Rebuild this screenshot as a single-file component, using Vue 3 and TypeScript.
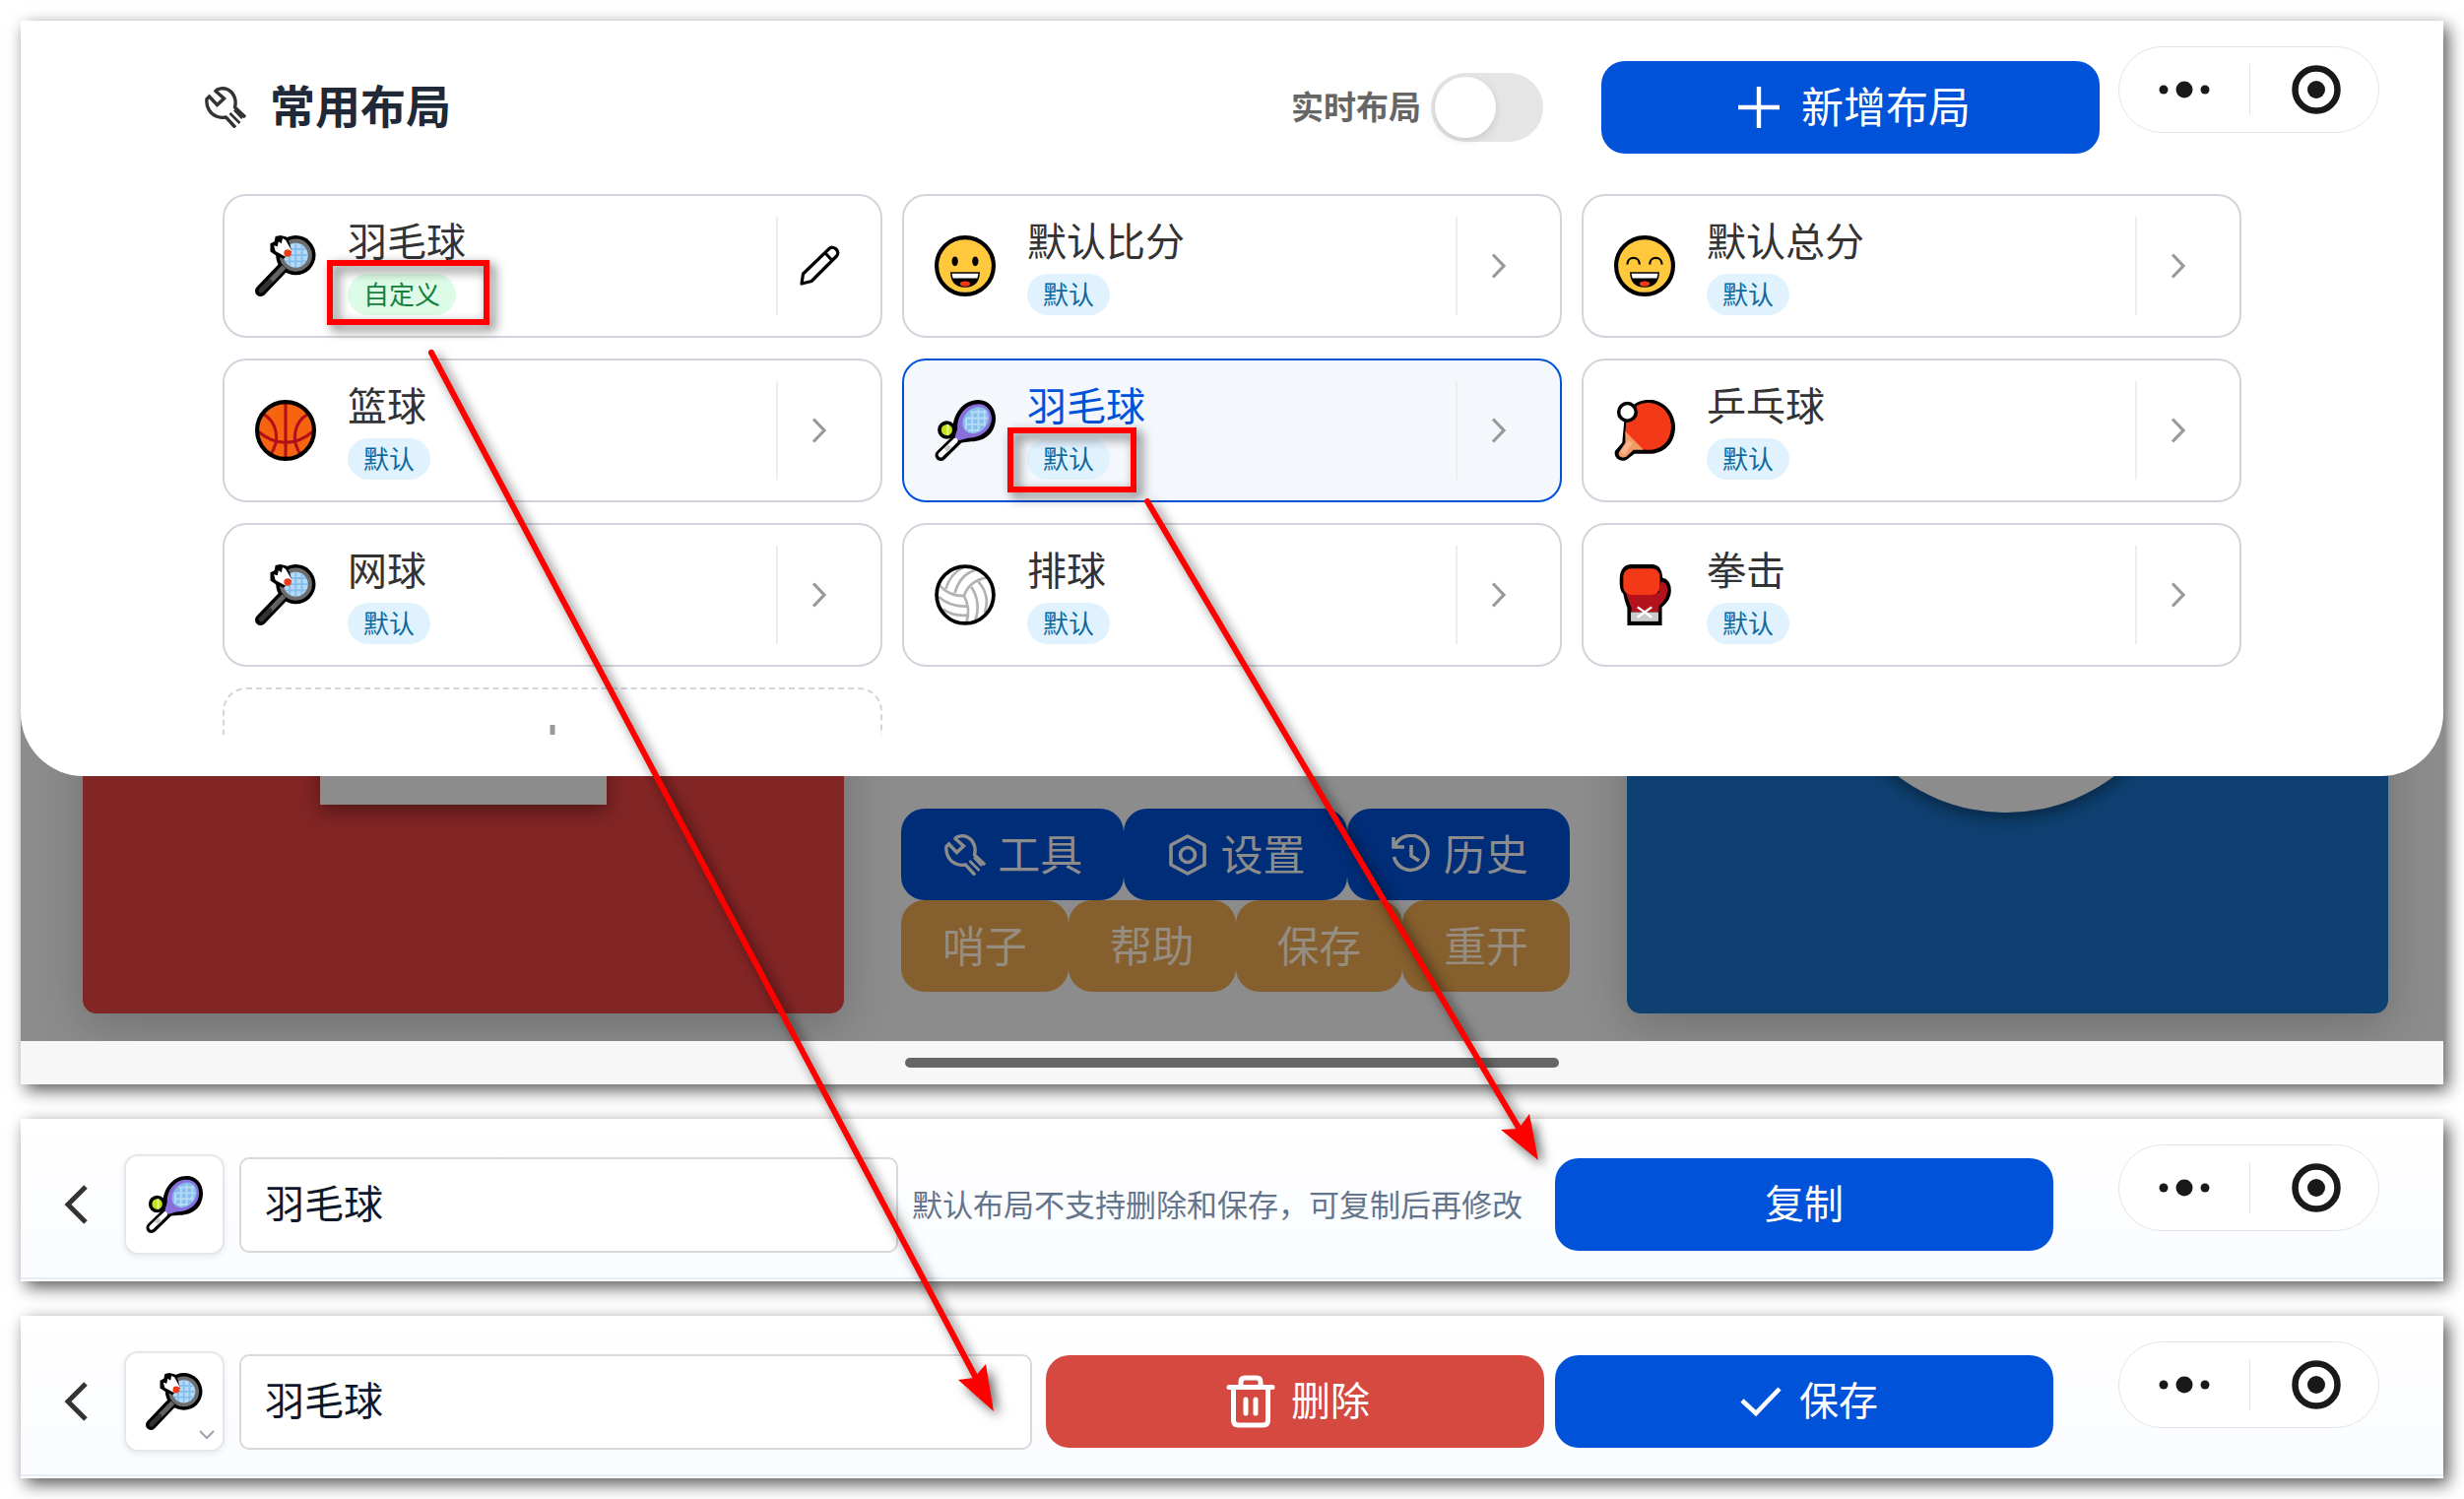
<script setup lang="ts">
import { ref } from 'vue'

interface LayoutItem {
  id: number
  name: string
  icon: string
  custom?: boolean
  active?: boolean
}

const layouts: LayoutItem[] = [
  { id: 1, name: '羽毛球', icon: 'badminton', custom: true },
  { id: 2, name: '默认比分', icon: 'grin' },
  { id: 3, name: '默认总分', icon: 'smile' },
  { id: 4, name: '篮球', icon: 'basketball' },
  { id: 5, name: '羽毛球', icon: 'tennis', active: true },
  { id: 6, name: '乒乓球', icon: 'pingpong' },
  { id: 7, name: '网球', icon: 'badminton' },
  { id: 8, name: '排球', icon: 'volleyball' },
  { id: 9, name: '拳击', icon: 'boxing' },
]

const mainActions = [
  { label: '工具', icon: 'wrench' },
  { label: '设置', icon: 'settings' },
  { label: '历史', icon: 'history' },
]
const quickActions = ['哨子', '帮助', '保存', '重开']

const live = ref(false)
const defaultName = ref('羽毛球')
const customName = ref('羽毛球')
</script>

<template>
  <main class="page" lang="zh-CN">
    <svg class="sprite" aria-hidden="true">
      <symbol id="wrench" viewBox="0 0 42 42">
        <g fill="none" stroke="currentColor" stroke-width="3.4">
          <path d="M31 41.500L21.500 31C19 31.500 16 31.500 13 30.500C5 28 1 20 2 12.500L4.500 10L12.500 18.500L19.500 12L11 4.500C13 1.500 19 1 23.500 3C29.500 6 32.500 13.500 30.500 21L41 31" />
          <path d="M25.500 27L35.500 37M30 23.500L38 32" stroke-width="2.600" />
        </g>
      </symbol>
      <symbol id="settings" viewBox="0 0 42 42">
        <g fill="none" stroke="currentColor" stroke-width="3.6">
          <path d="M21 2L38 11V31L21 40L4 31V11Z" stroke-linejoin="round" />
          <circle cx="21" cy="21" r="7.500" />
        </g>
      </symbol>
      <symbol id="history" viewBox="0 0 42 42">
        <g fill="none" stroke="currentColor" stroke-width="3.6">
          <path d="M3 3V13H14" />
          <path d="M4 13A17.500 17.500 0 1 1 3.500 23" />
          <path d="M21 11V22L29 27" />
        </g>
      </symbol>
      <symbol id="plus" viewBox="0 0 42 42">
        <path d="M21 0V42M0 21H42" fill="none" stroke="currentColor" stroke-width="4.4" />
      </symbol>
      <symbol id="pencil" viewBox="0 0 42 42">
        <g fill="none" stroke="currentColor" stroke-width="3.2" stroke-linejoin="round">
          <path d="M3 39L4.500 29L31 3.500C33 1.500 36 2 38 4C40 6 40.500 9 38.500 11L13 36.500Z" />
          <path d="M27 8L34 15.500" />
        </g>
      </symbol>
      <symbol id="chevron" viewBox="0 0 16 28">
        <path d="M2 2.500L13 14L2 25.500" fill="none" stroke="currentColor" stroke-width="3.2" />
      </symbol>
      <symbol id="back" viewBox="0 0 24 40">
        <path d="M22 2L4 20L22 38" fill="none" stroke="currentColor" stroke-width="5" />
      </symbol>
      <symbol id="down" viewBox="0 0 16 10">
        <path d="M1 1L8 8L15 1" fill="none" stroke="currentColor" stroke-width="2" />
      </symbol>
      <symbol id="check" viewBox="0 0 42 30">
        <path d="M2 14L16 27L40 2" fill="none" stroke="currentColor" stroke-width="4.6" />
      </symbol>
      <symbol id="trash" viewBox="0 0 50 54">
        <g fill="none" stroke="currentColor" stroke-width="5" stroke-linecap="round" stroke-linejoin="round">
          <path d="M3 12.500H47M7.500 13V46Q7.500 51 12.500 51H37.500Q42.500 51 42.500 46V13M15 12V7Q15 3 19 3H31Q35 3 35 7V12" />
          <path d="M20 25V39M30 25V39" />
        </g>
      </symbol>

      <symbol id="badminton" viewBox="0 0 60 60">
        <path d="M27 32L5.500 54.500" stroke="#000" stroke-width="11" stroke-linecap="round" />
        <circle cx="40" cy="19.500" r="19.500" fill="#000" />
        <circle cx="40" cy="19.500" r="14" fill="#b3daf7" stroke="#6d6d6d" stroke-width="4" />
        <path d="M34 9V30M40 7.500V31.500M46 9V30M30 13.500H50M28 19.500H52M30 25.500H50" stroke="#86bdea" stroke-width="1.8" />
        <path d="M28.500 31L15 45" stroke="#636363" stroke-width="5" />
        <path d="M14.500 45.500L6 54" stroke="#333" stroke-width="5" stroke-linecap="round" />
        <path d="M25 0L31 1.500L34 8L36 16L28 23L21 20L15 16V8L19 6L20 1Z" fill="#000" />
        <path d="M27 3L30 4.500L36 15L30 21L20 15.500L18.500 10L22 11L23 6L26 8Z" fill="#fff" />
        <circle cx="32" cy="17.500" r="3.600" fill="#f03a17" />
      </symbol>
      <symbol id="tennis" viewBox="0 0 60 60">
        <path d="M23 38L6 54.500" stroke="#000" stroke-width="11" stroke-linecap="round" />
        <path d="M22 39L18 28C18 14 28 0 43 0C53 0 60 8 60 18C60 32 50 41 36 41L27 42Z" fill="#000" />
        <path d="M20 36.500L22.500 28C22 15 31 4 43 4C51 4 56 10 56 18C56 29 46 37.500 33 37.500L24 40Z" fill="#8a6fdc" />
        <ellipse cx="40.500" cy="20" rx="14.500" ry="11.500" transform="rotate(-48 40.500 20)" fill="#86bdea" />
        <path d="M31 18V29M37 11V32M43 9V31M49 10V26M35 12H51M31 18H52M30 24H50M33 30H43" stroke="#b3daf7" stroke-width="2" />
        <circle cx="12" cy="29.500" r="7.200" fill="#c5e31a" stroke="#000" stroke-width="3.6" />
        <path d="M13 24V35" stroke="#e6f58a" stroke-width="2" />
        <path d="M20.500 40L6 54" stroke="#fff" stroke-width="5" stroke-linecap="round" />
        <path d="M15 45.500L11 49.500" stroke="#ccc" stroke-width="5" />
      </symbol>
      <symbol id="basketball" viewBox="0 0 60 60">
        <circle cx="30" cy="30" r="28" fill="#f7640f" />
        <g fill="none" stroke="#b0101a" stroke-width="3">
          <path d="M30 3V57M3 31Q16 42 30 42T57 31M8 14C22 22 25 40 15 54M52 14C38 22 35 40 45 54" />
        </g>
        <circle cx="30" cy="30" r="28" fill="none" stroke="#000" stroke-width="4" />
      </symbol>
      <symbol id="volleyball" viewBox="0 0 60 60">
        <circle cx="30" cy="30" r="28" fill="#fff" />
        <g fill="none" stroke="#b2b2b2" stroke-width="2.600">
          <path d="M29 31C32 22 39 15 52 13M29 31C19 31 9 27 4 19M29 31C34 40 34 49 31 58" />
          <path d="M20 28C23 17 30 8 42 5M11 24C14 14 20 7 28 3" />
          <path d="M4 32C12 39 22 42 33 41M8 44C15 49 24 51 33 50" />
          <path d="M36 22C42 31 44 43 40 55M43 17C51 26 53 37 49 48" />
        </g>
        <circle cx="30" cy="30" r="28" fill="none" stroke="#000" stroke-width="3.6" />
      </symbol>
      <symbol id="grin" viewBox="0 0 60 60">
        <circle cx="30" cy="30" r="28" fill="#ffc83d" stroke="#000" stroke-width="4" />
        <ellipse cx="20" cy="25.500" rx="3" ry="4.800" />
        <ellipse cx="40" cy="25.500" rx="3" ry="4.800" />
        <path d="M15.500 36H44.500Q44 51 30 51Q16 51 15.500 36Z" />
        <path d="M17 37.500H43L42 42H18Z" fill="#fff" />
        <ellipse cx="30" cy="47.500" rx="5" ry="2.500" fill="#f03a17" />
      </symbol>
      <symbol id="smile" viewBox="0 0 60 60">
        <circle cx="30" cy="30" r="28" fill="#ffc83d" stroke="#000" stroke-width="4" />
        <path d="M13 28.500C13 20 25 20 25 28.500M35 28.500C35 20 47 20 47 28.500" fill="none" stroke="#000" stroke-width="2.200" />
        <path d="M15.500 36H44.500Q44 51 30 51Q16 51 15.500 36Z" />
        <path d="M17 37.500H43L42 42H18Z" fill="#fff" />
        <ellipse cx="30" cy="47.500" rx="5" ry="2.500" fill="#f03a17" />
      </symbol>
      <symbol id="pingpong" viewBox="0 0 60 60">
        <path d="M10 20L20 4C40 -8 61 8 60 28C59 44 48 54 32 53H20L12 59C5 62 -1 56 1 50L8 42Z" fill="#000" />
        <path d="M12 20L22 6C38 -3 57 9 56 28C55 42 45 50 32 49L20 48L11 33Z" fill="#f23a18" />
        <path d="M11 31L29 49H19L12 56C7 58 3 55 5 51L11 42Z" fill="#f19a66" />
        <path d="M16 41L8 53" stroke="#fbb48c" stroke-width="5" />
        <circle cx="13" cy="12" r="8.500" fill="#fff" stroke="#000" stroke-width="3.400" />
      </symbol>
      <symbol id="boxing" viewBox="0 0 60 60">
        <path d="M16 0H38Q47 1 47.500 13Q56 15 56 26Q56 35 47 42V60H13V43Q10 35 9 29Q5 26 5.500 14Q6 1 16 0Z" fill="#000" />
        <path d="M12 28H44L46 17Q53 18 52.500 26Q52 34 44 41V47H17V42Q14 37 12 28Z" fill="#b3111b" />
        <rect x="9" y="4" width="36" height="26" rx="8" fill="#f23a18" />
        <rect x="16.500" y="47" width="27" height="9" fill="#ccc" />
        <path d="M23 42L37 52M37 42L23 52" stroke="#fff" stroke-width="2.200" />
      </symbol>
    </svg>

    <section class="phone panel">
      <div class="board">
        <div class="stage">
          <div class="team red"><span class="score-box"></span></div>
          <div class="controls">
            <div class="control-row primary">
              <button v-for="a in mainActions" :key="a.label" type="button">
                <svg class="icon-42" aria-hidden="true"><use :href="'#' + a.icon" /></svg>
                <span class="label">{{ a.label }}</span>
              </button>
            </div>
            <div class="control-row amber">
              <button v-for="a in quickActions" :key="a" type="button"><span class="label">{{ a }}</span></button>
            </div>
          </div>
          <div class="team blue"><span class="score-round"></span></div>
        </div>
        <div class="home"><span class="home-bar"></span></div>
      </div>

      <div class="sheet">
        <header class="sheet-head">
          <svg class="icon-42 head-icon" aria-hidden="true"><use href="#wrench" /></svg>
          <h1>常用布局</h1>
          <label class="live">
            <span class="live-text">实时布局</span>
            <input v-model="live" type="checkbox" role="switch" class="switch" />
          </label>
          <button type="button" class="btn add">
            <svg class="icon-42" aria-hidden="true"><use href="#plus" /></svg>
            <span class="label">新增布局</span>
          </button>
        </header>
        <div class="grid">
          <article v-for="item in layouts" :key="item.id" class="card" :class="{ active: item.active }">
            <button type="button" class="card-main">
              <svg class="sport" aria-hidden="true"><use :href="'#' + item.icon" /></svg>
              <span class="card-text">
                <span class="card-name">{{ item.name }}</span>
                <span class="tag" :class="{ custom: item.custom }">{{ item.custom ? '自定义' : '默认' }}</span>
              </span>
            </button>
            <button type="button" class="card-action" :aria-label="item.custom ? '编辑' : '查看'">
              <svg v-if="item.custom" class="pencil" aria-hidden="true"><use href="#pencil" /></svg>
              <svg v-else class="chevron" aria-hidden="true"><use href="#chevron" /></svg>
            </button>
          </article>
          <button type="button" class="card new-card" aria-label="新增布局">
            <svg class="new-plus" viewBox="0 0 70 70" aria-hidden="true">
              <path d="M35 0V70M0 35H70" stroke="#999" stroke-width="5" />
            </svg>
          </button>
        </div>
      </div>
      <div class="capsule">
        <button type="button" aria-label="更多">
          <svg class="dots" viewBox="0 0 52 18"><circle cx="5" cy="9" r="4.500" /><circle cx="26" cy="9" r="8.500" /><circle cx="47" cy="9" r="4.500" /></svg>
        </button>
        <button type="button" aria-label="关闭">
          <svg class="ring" viewBox="0 0 50 50"><circle cx="25" cy="25" r="21.500" fill="none" stroke="#191919" stroke-width="6.500" /><circle cx="25" cy="25" r="9" /></svg>
        </button>
      </div>
    </section>

    <section class="editor panel">
      <div class="editor-row">
        <button type="button" class="back" aria-label="返回"><svg class="back-icon"><use href="#back" /></svg></button>
        <button type="button" class="tile" aria-label="图标"><svg class="tile-icon"><use href="#tennis" /></svg></button>
        <input v-model="defaultName" class="name" type="text" aria-label="布局名称" />
        <p class="hint">默认布局不支持删除和保存，可复制后再修改</p>
        <button type="button" class="btn"><span class="label">复制</span></button>
      </div>
      <div class="capsule">
        <button type="button" aria-label="更多">
          <svg class="dots" viewBox="0 0 52 18"><circle cx="5" cy="9" r="4.500" /><circle cx="26" cy="9" r="8.500" /><circle cx="47" cy="9" r="4.500" /></svg>
        </button>
        <button type="button" aria-label="关闭">
          <svg class="ring" viewBox="0 0 50 50"><circle cx="25" cy="25" r="21.500" fill="none" stroke="#191919" stroke-width="6.500" /><circle cx="25" cy="25" r="9" /></svg>
        </button>
      </div>
    </section>

    <section class="editor panel">
      <div class="editor-row">
        <button type="button" class="back" aria-label="返回"><svg class="back-icon"><use href="#back" /></svg></button>
        <button type="button" class="tile" aria-label="选择图标">
          <svg class="tile-icon"><use href="#badminton" /></svg>
          <svg class="tile-down"><use href="#down" /></svg>
        </button>
        <input v-model="customName" class="name" type="text" aria-label="布局名称" />
        <button type="button" class="btn danger">
          <svg class="trash"><use href="#trash" /></svg>
          <span class="label">删除</span>
        </button>
        <button type="button" class="btn save">
          <svg class="check"><use href="#check" /></svg>
          <span class="label">保存</span>
        </button>
      </div>
      <div class="capsule">
        <button type="button" aria-label="更多">
          <svg class="dots" viewBox="0 0 52 18"><circle cx="5" cy="9" r="4.500" /><circle cx="26" cy="9" r="8.500" /><circle cx="47" cy="9" r="4.500" /></svg>
        </button>
        <button type="button" aria-label="关闭">
          <svg class="ring" viewBox="0 0 50 50"><circle cx="25" cy="25" r="21.500" fill="none" stroke="#191919" stroke-width="6.500" /><circle cx="25" cy="25" r="9" /></svg>
        </button>
      </div>
    </section>

    <!-- Red callouts linking each tag to its editor toolbar -->
    <svg class="notes" viewBox="0 0 2502 1522" aria-hidden="true">
      <g fill="none" stroke="#f00" stroke-width="6">
        <rect x="335" y="267" width="159" height="60" />
        <rect x="1026" y="437" width="125" height="60" />
        <path d="M438 358L992 1401M1165 509L1545 1150" stroke-linecap="round" />
      </g>
      <path d="M1009 1433L973 1401L989 1399L1001 1385Z" fill="#f00" />
      <path d="M1562 1178L1524 1147L1542 1146L1553 1131Z" fill="#f00" />
    </svg>
  </main>
</template>

<style>
body {
  margin: 0;
  background: #fff;
}
</style>

<style scoped>
.page {
  position: relative;
  box-sizing: border-box;
  padding: 21px;
  display: flex;
  flex-direction: column;
  gap: 35px;
  font-family: "Noto Sans CJK SC", "Noto Sans", sans-serif;
  color: #333;
}
.page *,
.page *::before {
  box-sizing: border-box;
}
.sprite {
  position: absolute;
  width: 0;
  height: 0;
}
button {
  margin: 0;
  padding: 0;
  border: 0;
  background: none;
  color: inherit;
  font: inherit;
  cursor: pointer;
}
svg {
  display: block;
  flex: none;
}
.icon-42 {
  width: 42px;
  height: 42px;
}
.label {
  padding-bottom: 6px;
}
.panel {
  position: relative;
  background: #fff;
  box-shadow: 5px 6px 16px rgba(0, 0, 0, 0.65);
}
.phone {
  display: grid;
}
.board,
.sheet {
  grid-area: 1 / 1;
}
.board {
  display: flex;
  flex-direction: column;
  background: #8c8c8c;
}
.stage {
  display: grid;
  grid-template-columns: 773fr 679fr 773fr;
  column-gap: 58px;
  align-items: end;
  padding: 158px 56px 28px 63px;
  overflow: hidden;
}
.team {
  display: flex;
  flex-direction: column;
  justify-content: flex-end;
  align-items: center;
  height: 850px;
  border-radius: 14px;
  box-shadow: 0 12px 48px rgba(0, 0, 0, 0.2);
}
.red {
  background: #822525;
  padding-bottom: 212px;
}
.blue {
  background: #0e4172;
  padding: 0 4px 204px 0;
}
.score-box {
  width: 291px;
  height: 300px;
  background: #8c8c8c;
  box-shadow: 0 6px 18px rgba(0, 0, 0, 0.4);
}
.score-round {
  width: 364px;
  height: 364px;
  border-radius: 50%;
  background: #8c8c8c;
  box-shadow: 0 6px 18px rgba(0, 0, 0, 0.4);
}
.controls {
  padding-bottom: 22px;
}
.control-row {
  display: flex;
}
.control-row button {
  flex: 1;
  display: flex;
  align-items: center;
  justify-content: center;
  gap: 14px;
  height: 93px;
  border-radius: 24px;
  font-size: 43px;
  line-height: 60px;
}
.primary button {
  gap: 12px;
  padding-left: 2px;
  background: #002d78;
  color: #8c8c8c;
}
.amber button {
  background: #855f2d;
  color: #968c80;
}
.home {
  display: flex;
  align-items: center;
  justify-content: center;
  height: 44px;
  background: #f7f7f7;
}
.home-bar {
  width: 27%;
  height: 10px;
  border-radius: 5px;
  background: #666;
}
.sheet {
  position: relative;
  align-self: start;
  padding: 41px 205px 42px;
  border-radius: 0 0 64px 64px;
  background: #fff;
}
.sheet-head {
  display: flex;
  align-items: center;
  margin: 0 144px 41px -18px;
}
.head-icon {
  margin-right: 24px;
}
h1 {
  margin: 0 auto 0 0;
  padding-bottom: 8px;
  font-size: 46px;
  line-height: 60px;
  font-weight: 700;
  color: #1f2937;
}
.live {
  display: flex;
  align-items: center;
  gap: 10px;
  margin-right: 59px;
  font-size: 33px;
  line-height: 48px;
  font-weight: 700;
  color: #666;
}
.live-text {
  padding-bottom: 4px;
}
.switch {
  appearance: none;
  display: flex;
  align-items: center;
  width: 114px;
  height: 70px;
  margin: 0;
  padding: 4px;
  border-radius: 35px;
  background: #e5e5e5;
}
.switch::before {
  content: "";
  width: 62px;
  height: 62px;
  border-radius: 50%;
  background: #fff;
  box-shadow: 0 3px 8px rgba(0, 0, 0, 0.12);
}
.switch:checked {
  justify-content: flex-end;
  background: #0052d9;
}
.btn {
  flex: none;
  display: flex;
  align-items: center;
  justify-content: center;
  width: 506px;
  height: 94px;
  border-radius: 24px;
  background: #0052d9;
  color: #fff;
  font-size: 40px;
  line-height: 60px;
}
.add {
  gap: 22px;
  padding-left: 8px;
  font-size: 43px;
}
.grid {
  display: grid;
  grid-template-columns: repeat(3, 1fr);
  grid-auto-rows: 146px;
  gap: 21px 20px;
  max-height: 549px;
  overflow: hidden;
}
.card {
  display: flex;
  align-items: center;
  border: 2px solid #d1d5db;
  border-radius: 24px;
  background: #fff;
}
.card-main {
  flex: 1;
  display: flex;
  align-items: center;
  gap: 32px;
  padding-left: 31px;
  text-align: left;
}
.sport {
  width: 62px;
  height: 62px;
}
.card-text {
  display: flex;
  flex-direction: column;
  align-items: flex-start;
  gap: 12px;
}
.card-name {
  font-size: 40px;
  line-height: 46px;
}
.tag {
  padding: 0 16px 2px;
  border-radius: 21px;
  background: #e0f2fe;
  color: #0b6aa2;
  font-size: 26px;
  line-height: 40px;
}
.tag.custom {
  background: #dcfce7;
  color: #15803d;
}
.card-action {
  display: flex;
  align-items: center;
  justify-content: center;
  width: 86px;
  height: 100px;
  margin-right: 20px;
  border-left: 2px solid #eee;
  color: #999;
}
.pencil {
  width: 42px;
  height: 42px;
  color: #000;
}
.chevron {
  width: 16px;
  height: 28px;
}
.card.active {
  border-color: #0052d9;
  background: #f4f7fc;
}
.active .card-name {
  color: #0052d9;
}
.new-card {
  justify-content: center;
  border-style: dashed;
}
.new-plus {
  width: 70px;
  height: 70px;
}
.capsule {
  position: absolute;
  top: 26px;
  right: 65px;
  display: grid;
  grid-template-columns: 1fr 1fr;
  align-items: center;
  width: 265px;
  height: 88px;
  border: 1px solid #e3e5e5;
  border-radius: 44px;
  background: #fff;
  fill: #191919;
}
.capsule button {
  display: flex;
  align-items: center;
  justify-content: center;
  height: 52px;
}
.capsule button + button {
  border-left: 1px solid #e3e5e5;
  padding-left: 4px;
}
.dots {
  width: 52px;
  height: 18px;
}
.ring {
  width: 50px;
  height: 50px;
}
.editor {
  padding-bottom: 2px;
}
.editor-row {
  display: flex;
  align-items: center;
  padding: 36px 396px 23px 44px;
  background: linear-gradient(#fff, #fafcff);
  border-bottom: 2px solid #e6edf6;
}
.back {
  width: 24px;
  margin-right: 37px;
}
.back-icon {
  width: 24px;
  height: 40px;
}
.tile {
  position: relative;
  flex: none;
  display: flex;
  align-items: center;
  justify-content: center;
  width: 102px;
  height: 102px;
  margin-right: 15px;
  border: 2px solid #e5e7eb;
  border-radius: 14px;
  background: #fff;
  box-shadow: 0 2px 6px rgba(0, 0, 0, 0.08);
}
.tile-icon {
  width: 58px;
  height: 58px;
}
.tile-down {
  position: absolute;
  right: 8px;
  bottom: 10px;
  width: 16px;
  height: 10px;
  color: #9ca3af;
}
.name {
  flex: 1;
  min-width: 0;
  height: 97px;
  padding: 0 24px 6px;
  border: 2px solid #d9d9d9;
  border-radius: 10px;
  background: #fff;
  color: #0f172a;
  font: 40px/60px "Noto Sans CJK SC", "Noto Sans", sans-serif;
}
.hint {
  margin: 0 33px 0 14px;
  padding-bottom: 2px;
  font-size: 31px;
  line-height: 48px;
  white-space: nowrap;
  color: #64748b;
}
.danger {
  gap: 16px;
  margin: 0 11px 0 14px;
  padding-left: 6px;
  background: #d54941;
}
.save {
  gap: 18px;
  padding-left: 10px;
}
.trash {
  width: 50px;
  height: 54px;
}
.check {
  width: 42px;
  height: 30px;
}
.notes {
  position: absolute;
  top: 0;
  left: 0;
  width: 100%;
  pointer-events: none;
  filter: drop-shadow(5px 5px 6px rgba(0, 0, 0, 0.6));
}
</style>
